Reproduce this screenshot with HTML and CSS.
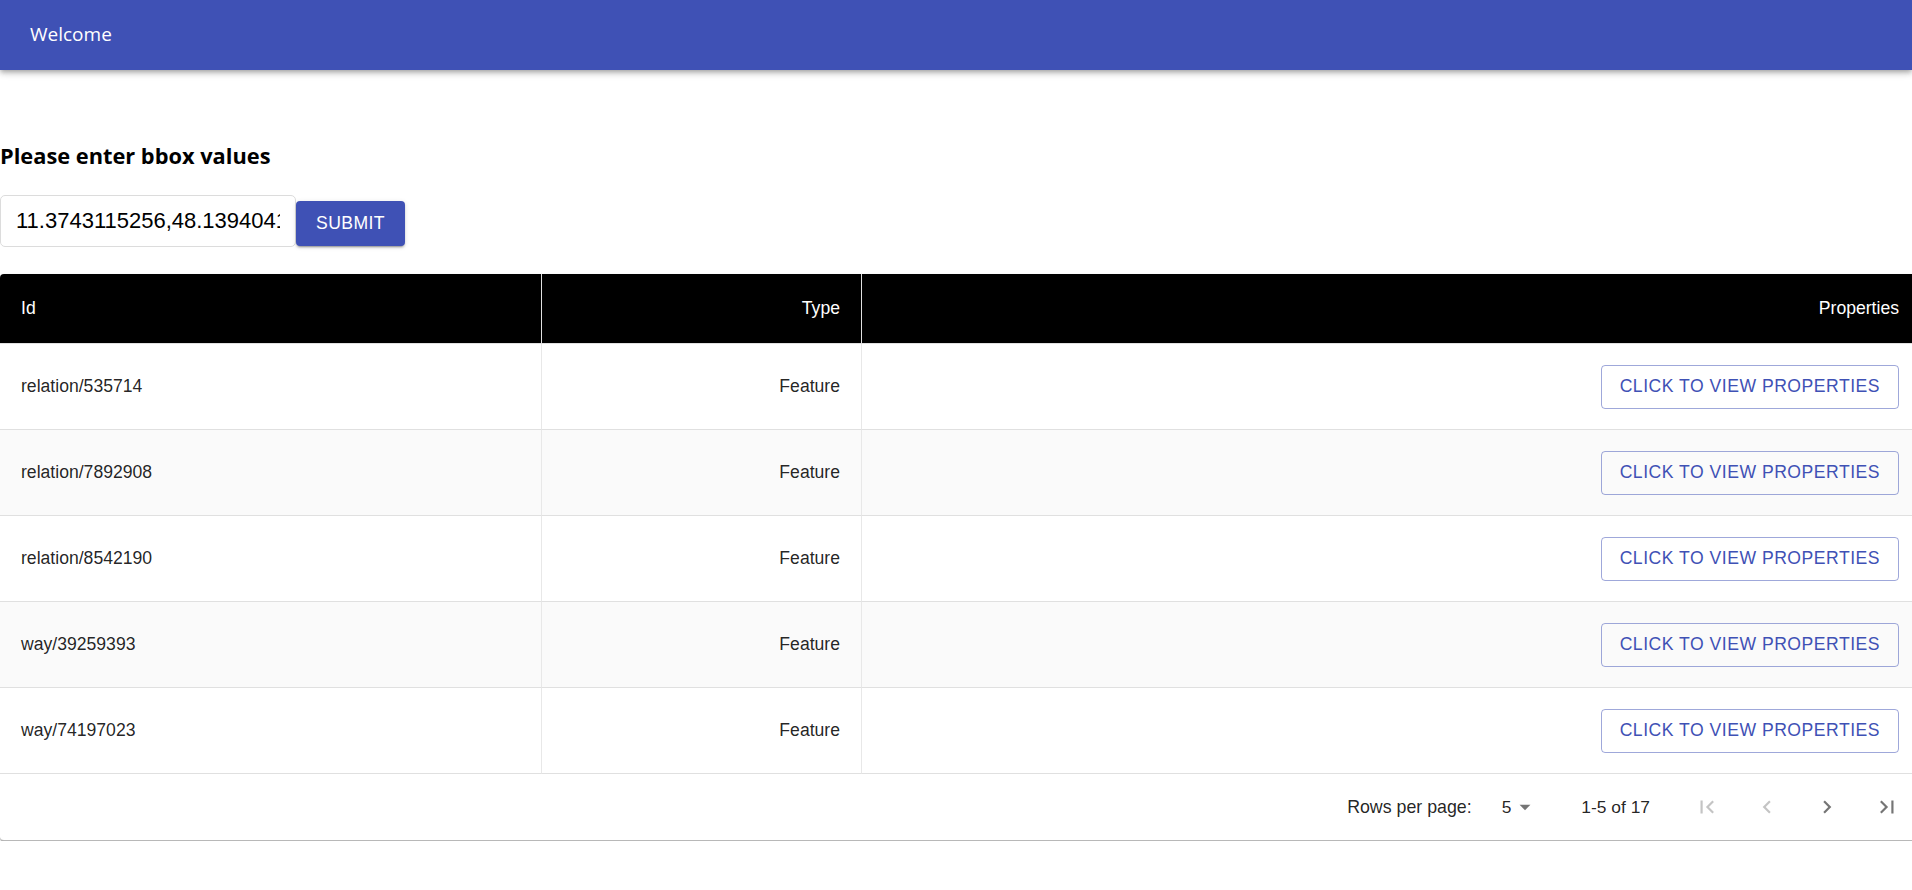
FILE: index.html
```html
<!DOCTYPE html>
<html lang="en">
<head>
<meta charset="utf-8">
<title>Welcome</title>
<link rel="stylesheet" href="styles.css">
</head>
<body>
<header class="appbar">
  <div class="appbar-title">Welcome</div>
</header>
<main class="content">
  <h3 class="form-title">Please enter bbox values</h3>
  <form class="bbox-form">
    <input class="bbox-input" type="text" value="11.3743115256,48.1394041617,11.3801893008,48.1434359315">
    <button class="btn-submit" type="button">Submit</button>
  </form>
  <div class="table-paper">
    <table class="data-table">
      <colgroup>
        <col class="col-id">
        <col class="col-type">
        <col class="col-props">
      </colgroup>
      <thead>
        <tr class="head-row">
          <th class="cell-left">Id</th>
          <th class="cell-right">Type</th>
          <th class="cell-right">Properties</th>
        </tr>
      </thead>
      <tbody>
        <tr class="body-row">
          <td class="cell-left">relation/535714</td>
          <td class="cell-right">Feature</td>
          <td class="cell-right"><button class="btn-outline" type="button">Click to view properties</button></td>
        </tr>
        <tr class="body-row alt">
          <td class="cell-left">relation/7892908</td>
          <td class="cell-right">Feature</td>
          <td class="cell-right"><button class="btn-outline" type="button">Click to view properties</button></td>
        </tr>
        <tr class="body-row">
          <td class="cell-left">relation/8542190</td>
          <td class="cell-right">Feature</td>
          <td class="cell-right"><button class="btn-outline" type="button">Click to view properties</button></td>
        </tr>
        <tr class="body-row alt">
          <td class="cell-left">way/39259393</td>
          <td class="cell-right">Feature</td>
          <td class="cell-right"><button class="btn-outline" type="button">Click to view properties</button></td>
        </tr>
        <tr class="body-row">
          <td class="cell-left">way/74197023</td>
          <td class="cell-right">Feature</td>
          <td class="cell-right"><button class="btn-outline" type="button">Click to view properties</button></td>
        </tr>
      </tbody>
    </table>
    <div class="pagination">
      <span class="rows-label">Rows per page:</span>
      <span class="rows-select">5<svg class="drop-icon" viewBox="0 0 24 24"><path d="M7 10l5 5 5-5z"/></svg></span>
      <span class="range-label">1-5 of 17</span>
      <span class="page-btn disabled"><svg viewBox="0 0 24 24"><path d="M18.41 16.59L13.82 12l4.59-4.59L17 6l-6 6 6 6zM6 6h2v12H6z"/></svg></span>
      <span class="page-btn disabled"><svg viewBox="0 0 24 24"><path d="M15.41 7.41L14 6l-6 6 6 6 1.41-1.41L10.83 12z"/></svg></span>
      <span class="page-btn"><svg viewBox="0 0 24 24"><path d="M10 6L8.59 7.41 13.17 12l-4.58 4.59L10 18l6-6z"/></svg></span>
      <span class="page-btn"><svg viewBox="0 0 24 24"><path d="M5.59 7.41L10.18 12l-4.59 4.59L7 18l6-6-6-6zM16 6h2v12h-2z"/></svg></span>
    </div>
  </div>
</main>
</body>
</html>
```
FILE: styles.css
```css
html, body {
  margin: 0;
  padding: 0;
  overflow: hidden;
  background: #fff;
}

body {
  font-family: "Liberation Sans", Arial, sans-serif;
  color: rgba(0, 0, 0, 0.87);
}

.appbar {
  height: 70px;
  background: #3f51b5;
  display: flex;
  align-items: center;
  padding: 0 30px;
  box-shadow: 0 2px 4px -1px rgba(0,0,0,.2), 0 4px 5px 0 rgba(0,0,0,.14), 0 1px 10px 0 rgba(0,0,0,.12);
  position: relative;
}

.appbar-title {
  font-family: "Open Sans", "Noto Sans", sans-serif;
  font-size: 19px;
  color: #fff;
  margin-top: -3px;
}

.content {
  display: flex;
  flex-direction: column;
}

.form-title {
  font-family: "Open Sans", "Noto Sans", sans-serif;
  font-weight: 700;
  font-size: 21.8px;
  line-height: 25px;
  margin: 73px 0 0 0;
  color: #000;
}

.bbox-form {
  display: flex;
  align-items: flex-start;
  margin: 27px 0 0 0;
}

.bbox-input {
  box-sizing: border-box;
  width: 296px;
  height: 52px;
  border: 1px solid #dcdcdc;
  border-radius: 5px;
  padding: 0 15px;
  font-family: "Liberation Sans", Arial, sans-serif;
  font-size: 22px;
  color: #000;
  outline: none;
}

.btn-submit {
  height: 45px;
  margin-top: 6px;
  padding: 0 20px;
  border: none;
  border-radius: 4px;
  background: #3f51b5;
  color: #fff;
  font-family: "Liberation Sans", Arial, sans-serif;
  font-size: 17.6px;
  letter-spacing: 0.4px;
  text-transform: uppercase;
  box-shadow: 0 3px 1px -2px rgba(0,0,0,.2), 0 2px 2px 0 rgba(0,0,0,.14), 0 1px 5px 0 rgba(0,0,0,.12);
}

.table-paper {
  margin-top: 27px;
  width: calc(100% + 8px);
  border-radius: 4px;
  overflow: hidden;
  border-bottom: 1px solid #b8b8b8;
  box-shadow: 0 2px 1px -1px rgba(0,0,0,.2), 0 1px 1px 0 rgba(0,0,0,.14), 0 1px 3px 0 rgba(0,0,0,.12);
  background: #fff;
}

.data-table {
  width: 100%;
  border-collapse: separate;
  border-spacing: 0;
  table-layout: fixed;
  font-size: 17.6px;
}

.col-id { width: 541px; }
.col-type { width: 320px; }

.head-row {
  height: 70px;
  background: #000;
}

.head-row th {
  color: #fff;
  font-weight: 400;
  padding: 0 21px;
  border-bottom: 1px solid #e0e0e0;
}

.head-row th + th {
  border-left: 1px solid #e0e0e0;
}

.body-row {
  height: 86px;
  background: #fff;
}

.body-row.alt {
  background: #fafafa;
}

.body-row td {
  padding: 0 21px;
  border-bottom: 1px solid #e0e0e0;
  color: rgba(0, 0, 0, 0.87);
}

.body-row td + td {
  border-left: 1px solid #e8e8e8;
}

.cell-left { text-align: left; }
.cell-right { text-align: right; }

.btn-outline {
  height: 44px;
  padding: 0 18px;
  border: 1px solid rgba(63, 81, 181, 0.5);
  border-radius: 4px;
  background: transparent;
  color: #3f51b5;
  font-family: "Liberation Sans", Arial, sans-serif;
  font-size: 17.6px;
  letter-spacing: 0.5px;
  text-transform: uppercase;
  vertical-align: middle;
}

.pagination {
  height: 66px;
  display: flex;
  align-items: center;
  justify-content: flex-end;
  padding-right: 3px;
  font-size: 17.4px;
  color: rgba(0, 0, 0, 0.87);
}

.rows-label {
  font-size: 17.8px;
  margin-right: 30px;
}

.rows-select {
  display: flex;
  align-items: center;
  margin-right: 43px;
}

.drop-icon {
  width: 26px;
  height: 26px;
  fill: #757575;
  margin-left: 1px;
}

.range-label {
  margin-right: 27px;
}

.page-btn {
  width: 60px;
  height: 50px;
  display: flex;
  align-items: center;
  justify-content: center;
}

.page-btn svg {
  width: 26px;
  height: 26px;
  fill: #757575;
}

.page-btn.disabled svg {
  fill: #c4c4c4;
}
```
